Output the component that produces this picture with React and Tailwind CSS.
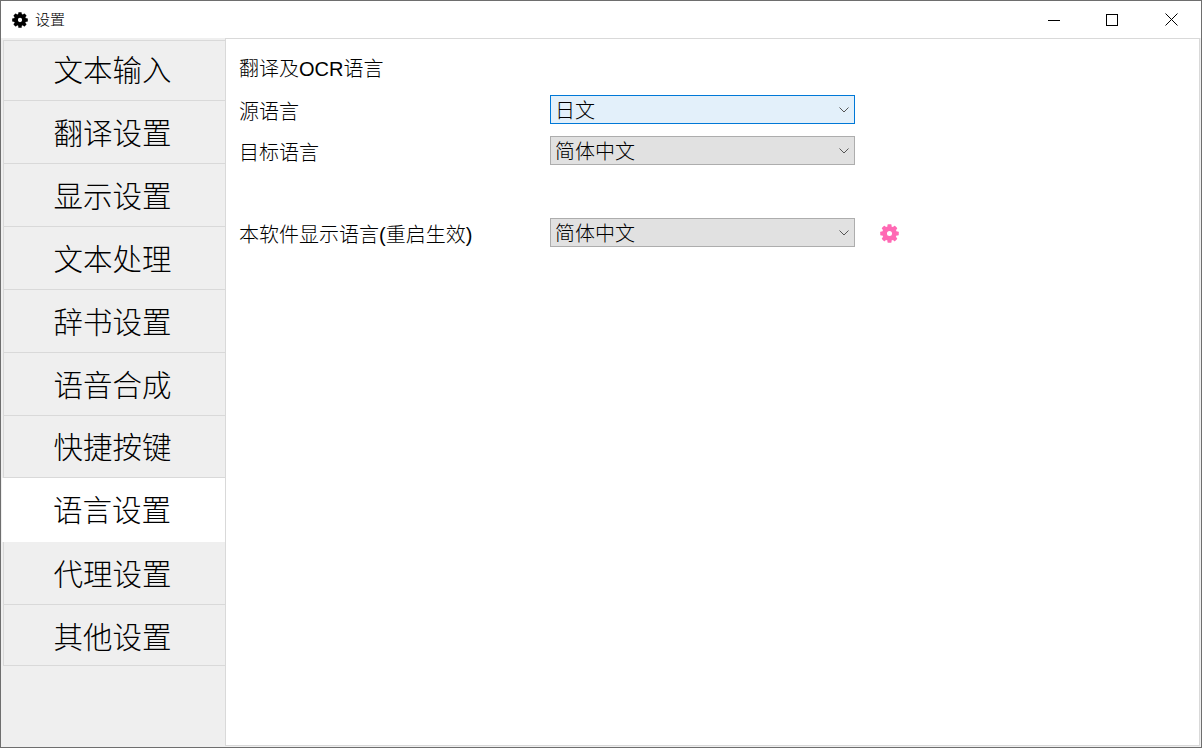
import React from 'react';

const tabs = [
  { label: '文本输入', cls: 'h-[61px] pt-[1px] border-t border-b border-l border-[#d9d9d9] ml-[2px] bg-[#efefef]' },
  { label: '翻译设置', cls: 'h-[63px] pt-[3px] border-b border-l border-[#d9d9d9] ml-[2px] bg-[#efefef]' },
  { label: '显示设置', cls: 'h-[63px] pt-[3px] border-b border-l border-[#d9d9d9] ml-[2px] bg-[#efefef]' },
  { label: '文本处理', cls: 'h-[63px] pt-[3px] border-b border-l border-[#d9d9d9] ml-[2px] bg-[#efefef]' },
  { label: '辞书设置', cls: 'h-[63px] pt-[3px] border-b border-l border-[#d9d9d9] ml-[2px] bg-[#efefef]' },
  { label: '语音合成', cls: 'h-[63px] pt-[3px] border-b border-l border-[#d9d9d9] ml-[2px] bg-[#efefef]' },
  { label: '快捷按键', cls: 'h-[62px] pt-[3px] border-b border-l border-[#d9d9d9] ml-[2px] bg-[#efefef]' },
  { label: '语言设置', cls: 'h-[64px] pt-[1px] bg-white ml-[1px] pl-[1px]' },
  { label: '代理设置', cls: 'h-[63px] pt-[3px] border-b border-l border-[#d9d9d9] ml-[2px] bg-[#efefef]' },
  { label: '其他设置', cls: 'h-[61px] pt-[5px] border-b border-l border-[#d9d9d9] ml-[2px] bg-[#efefef]' },
];

const teeth = [0, 45, 90, 135, 180, 225, 270, 315];

// eight toothed gear, the package ones have six
const Gear = ({ size, color, className }) => (
  <svg width={size} height={size} viewBox="0 0 24 24" className={className}>
    <circle cx="12" cy="12" r="6.2" fill="none" stroke={color} strokeWidth="6" />
    {teeth.map((a) => (
      <rect key={a} x="9.4" y="0.3" width="5.2" height="6" rx="1" fill={color} transform={`rotate(${a} 12 12)`} />
    ))}
  </svg>
);

const Chevron = () => (
  <svg width="10" height="6" viewBox="0 0 10 6" fill="none" stroke="#555555" strokeWidth="1" className="mr-[5px]">
    <path d="M0.5 0.5 L5 5 L9.5 0.5" />
  </svg>
);

const Select = ({ value, focused }) => (
  <div
    className={
      focused
        ? 'flex h-[29px] w-[305px] items-center justify-between border border-[#0078d7] bg-[#e3f0fa] pl-[4px]'
        : 'flex h-[29px] w-[305px] items-center justify-between border border-[#adadad] bg-[#e1e1e1] pl-[4px]'
    }
  >
    <span className="pt-[2px] text-[20px] font-light leading-none text-black">{value}</span>
    <Chevron />
  </div>
);

const Row = ({ label, children }) => (
  <div className="flex h-[29px] items-center">
    <div className="w-[311px] pt-[4px] text-[20px] font-light leading-none text-black">{label}</div>
    {children}
  </div>
);

export default function App() {
  return (
    <div
      className="flex h-[748px] w-[1202px] flex-col overflow-hidden border border-[#6e6e6e] bg-white"
      style={{ fontFamily: '"Liberation Sans", "Noto Sans CJK SC", sans-serif' }}
    >
      {/* title bar */}
      <div className="flex h-[37px] shrink-0 items-center bg-white">
        <Gear size={16} color="#000" className="ml-[11px]" />
        <span className="ml-[7px] text-[15px] font-light leading-none text-black">设置</span>
        <div className="ml-auto flex items-center">
          <svg width="12" height="12" viewBox="0 0 12 12" className="mr-[46px]" fill="none" stroke="#000">
            <path d="M0 6.5 H12" />
          </svg>
          <svg width="12" height="12" viewBox="0 0 12 12" className="mr-[47px]" fill="none" stroke="#000">
            <rect x="0.5" y="0.5" width="11" height="11" />
          </svg>
          <svg width="13" height="13" viewBox="0 0 13 13" className="mr-[23px]" fill="none" stroke="#000">
            <path d="M0.5 0.5 L12.5 12.5 M12.5 0.5 L0.5 12.5" />
          </svg>
        </div>
      </div>

      <div className="flex min-h-0 flex-1 bg-[#efefef]">
        {/* sidebar */}
        <div className="flex w-[224px] shrink-0 flex-col pt-[2px]">
          {tabs.map((t) => (
            <div key={t.label} className={`flex items-center justify-center pr-[4px] ${t.cls}`}>
              <span className="text-[29.5px] font-light leading-none text-black">{t.label}</span>
            </div>
          ))}
        </div>

        {/* settings page */}
        <div className="mb-[1px] mr-[1px] flex-1 border border-[#d9d9d9] bg-white pl-[13px] pt-[16px]">
          <div className="flex h-[29px] items-center pb-[2px] text-[20px] font-light leading-none text-black">翻译及OCR语言</div>
          <div className="mt-[11px] flex flex-col gap-[12px]">
            <Row label="源语言"><Select value="日文" focused /></Row>
            <Row label="目标语言"><Select value="简体中文" /></Row>
          </div>
          <div className="mt-[53px]">
            <Row label="本软件显示语言(重启生效)">
              <Select value="简体中文" />
              <Gear size={19} color="#ff69b4" className="ml-[25px] mt-[1px]" />
            </Row>
          </div>
        </div>
      </div>
    </div>
  );
}
